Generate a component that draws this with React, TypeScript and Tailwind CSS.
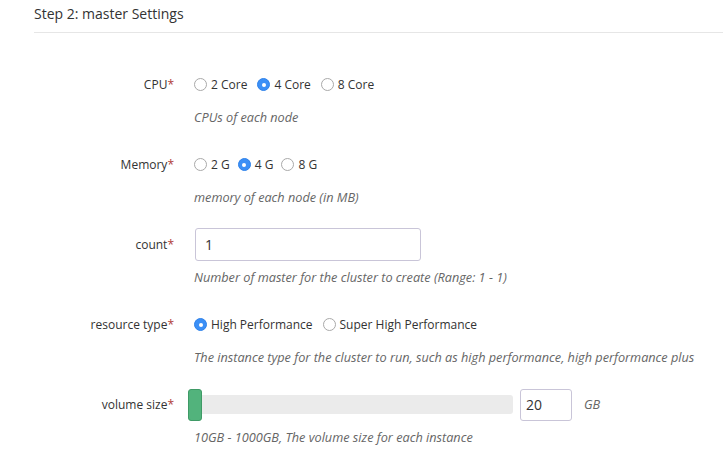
import React from "react";

const font = { fontFamily: '"Open Sans", "Noto Sans", Arial, sans-serif' };

function Radio({ checked, label }: { checked?: boolean; label: string }) {
  return (
    <div className="flex items-center gap-[4px]">
      {checked ? (
        <span className="w-[13px] h-[13px] rounded-full bg-[#3b8ff6] border border-[#2f82ea] flex items-center justify-center">
          <span className="w-[4px] h-[4px] rounded-full bg-white" />
        </span>
      ) : (
        <span className="w-[13px] h-[13px] rounded-full bg-white border border-[#a9a9a9]" />
      )}
      <span className="text-[12px] text-[#333]">{label}</span>
    </div>
  );
}

function Row({
  label,
  help,
  children,
}: {
  label: string;
  help: string;
  children: React.ReactNode;
}) {
  return (
    <div className="flex mb-[23px]">
      <div className="w-[174px] shrink-0 h-[33px] flex items-center justify-end text-[12px] text-[#333]">
        {label}
        <span className="text-[#b03a36]">*</span>
      </div>
      <div className="pl-[20px] flex flex-col">
        <div className="h-[33px] flex items-center">{children}</div>
        <div className="mt-[8px] h-[16px] leading-[16px] text-[12.7px] italic text-[#666] whitespace-nowrap">
          {help}
        </div>
      </div>
    </div>
  );
}

export default function App() {
  return (
    <div className="w-[723px] h-[462px] bg-white overflow-hidden" style={font}>
      <div className="pl-[34px]">
        <div className="h-[33px] border-b border-[#e6e6e6] flex items-start pt-[4px]">
          <span className="text-[14px] text-[#333] leading-[20px]">Step 2: master Settings</span>
        </div>
      </div>
      <div className="pt-[35px]">
        <Row label="CPU" help="CPUs of each node">
          <div className="flex items-center gap-[10px]">
            <Radio label="2 Core" />
            <Radio checked label="4 Core" />
            <Radio label="8 Core" />
          </div>
        </Row>
        <Row label="Memory" help="memory of each node (in MB)">
          <div className="flex items-center gap-[8px]">
            <Radio label="2 G" />
            <Radio checked label="4 G" />
            <Radio label="8 G" />
          </div>
        </Row>
        <Row label="count" help="Number of master for the cluster to create (Range: 1 - 1)">
          <div className="ml-[1px] w-[226px] h-[33px] border border-[#c9c5d8] rounded-[3px] flex items-center pl-[9px] text-[14px] text-[#333]">
            1
          </div>
        </Row>
        <Row
          label="resource type"
          help="The instance type for the cluster to run, such as high performance, high performance plus"
        >
          <div className="flex items-center gap-[10px]">
            <Radio checked label="High Performance" />
            <Radio label="Super High Performance" />
          </div>
        </Row>
        <Row label="volume size" help="10GB - 1000GB, The volume size for each instance">
          <div className="flex items-center">
            <div className="relative w-[319px] h-[19px] bg-[#ebebeb] rounded-[3px]">
              <div className="absolute left-[-6px] top-[-6px] w-[14px] h-[32px] bg-[#52b37c] border border-[#3f9a66] rounded-[3px]" />
            </div>
            <div className="ml-[7px] w-[52px] h-[32px] border border-[#c9c5d8] rounded-[3px] flex items-center pl-[5px] text-[14px] text-[#333]">
              20
            </div>
            <span className="ml-[12px] text-[12.7px] italic text-[#666]">GB</span>
          </div>
        </Row>
      </div>
    </div>
  );
}
